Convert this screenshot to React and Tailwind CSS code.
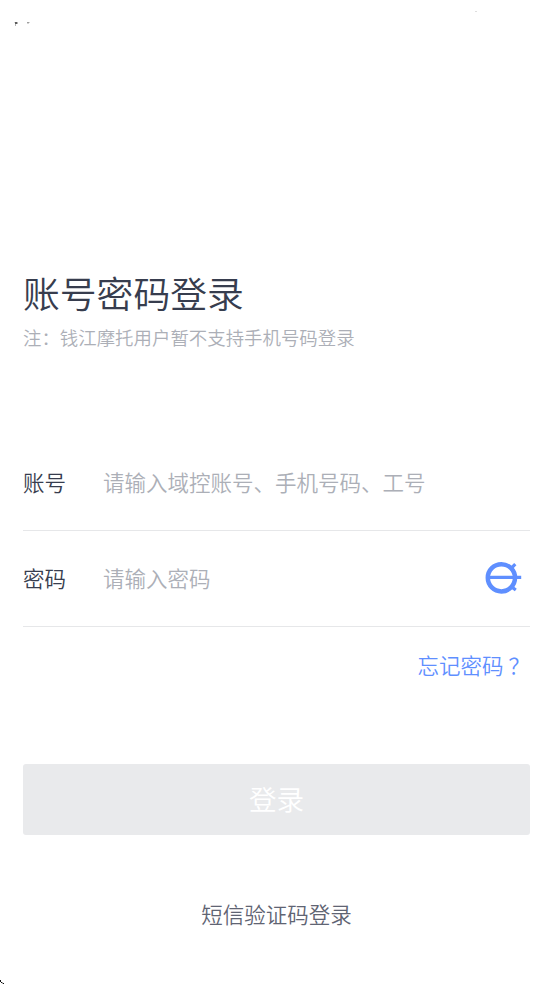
function StatusBar() {
  return (
    <svg className="block h-[40px] w-full" viewBox="0 0 553 40" shapeRendering="crispEdges" aria-hidden="true">
      <path d="M15 22h2v2h-2z" fill="#5c5c5c" />
      <path d="M17 22h1v2h-1zM15 24h1v2h-1z" fill="#b5b5b5" />
      <path d="M14 22h1v1h-1z" fill="#dddddd" />
      <path d="M27 22h2v1h-2z" fill="#a0a0a0" />
      <path d="M29 22h1v1h-1zM27 23h2v1h-2z" fill="#d5d5d5" />
      <path d="M475 11h2v1h-2z" fill="#dedede" />
    </svg>
  );
}

function VisibilityIcon() {
  return (
    <svg className="block" width="38" height="35" viewBox="0 0 38 35" fill="none" stroke="#5f8fff" aria-hidden="true">
      <circle cx="16.4" cy="16.8" r="13.6" strokeWidth="4.5" />
      <path d="M3.5 16.4h32.7" strokeWidth="3.2" />
      <path d="M26 7.5l4.3-4.3M26 25.4l4.8 3.6" strokeWidth="3.2" />
    </svg>
  );
}

function Field({ label, placeholder, type, children }) {
  return (
    <label className="flex h-24 items-center border-b border-[#e6e7e9] text-[21.5px] leading-8">
      <span className="relative -top-px w-20 shrink-0 text-[#373d4e]">{label}</span>
      <input
        type={type}
        placeholder={placeholder}
        className="relative -top-px h-8 min-w-0 flex-1 bg-transparent outline-none placeholder:text-[#acafb7] placeholder:opacity-100"
      />
      {children}
    </label>
  );
}

export default function App() {
  return (
    <main className="relative flex h-[984px] w-[553px] flex-col overflow-hidden bg-white font-['Noto_Sans_CJK_SC_DemiLight','Noto_Sans_CJK_SC',sans-serif] font-[350]">
      <StatusBar />
      <div className="flex flex-col px-[23px] pt-[228px]">
        <h1 className="h-12 text-[36.8px] leading-[48px] font-[350] text-[#373d4e]">账号密码登录</h1>
        <p className="mt-[7px] h-7 text-[18.43px] leading-7 text-[#acafb7]">注：钱江摩托用户暂不支持手机号码登录</p>
        <form className="mt-[84px] flex flex-col">
          <Field label="账号" placeholder="请输入域控账号、手机号码、工号" type="text" />
          <Field label="密码" placeholder="请输入密码" type="password">
            <button type="button" className="mr-[7px]" aria-label="显示密码">
              <VisibilityIcon />
            </button>
          </Field>
          <a className="mt-[22px] flex h-8 self-end text-[21.5px] leading-8 text-[#5f8fff]">
            忘记密码<span className="pl-[5px]">？</span>
          </a>
          <button type="button" className="mt-[83px] h-[71px] rounded-[3px] bg-[#e9eaec] pb-px text-[27.6px] text-white">
            登录
          </button>
        </form>
        <a className="mt-[63px] h-8 self-center text-[21.5px] leading-8 text-[#5f6473]">短信验证码登录</a>
      </div>
      <svg className="absolute bottom-0 left-0" width="4" height="4" viewBox="0 0 4 4" shapeRendering="crispEdges" aria-hidden="true">
        <path d="M0 0h1v2h-1zM1 2h1v1h-1zM3 3h1v1h-1z" fill="#111111" />
        <path d="M2 2h1v1h-1zM2 3h1v1h-1z" fill="#aaaaaa" />
      </svg>
    </main>
  );
}
